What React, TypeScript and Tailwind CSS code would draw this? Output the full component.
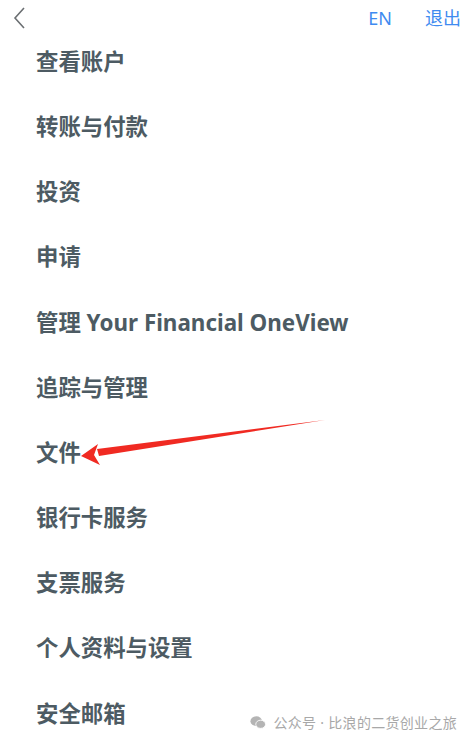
export default function App() {
  const items = [
    "查看账户",
    "转账与付款",
    "投资",
    "申请",
    "管理 Your Financial OneView",
    "追踪与管理",
    "文件",
    "银行卡服务",
    "支票服务",
    "个人资料与设置",
    "安全邮箱",
  ];

  return (
    <div
      className="relative w-[472px] h-[744px] overflow-hidden bg-white"
      style={{ fontFamily: '"Noto Sans", "Noto Sans CJK SC", sans-serif' }}
    >
      {/* header */}
      <div className="flex items-center h-[29px] pl-[12px] pr-[11px]">
        <svg width="14" height="24" viewBox="0 0 14 24" className="mt-[6px]">
          <path d="M12 2 L3 12 L12 22" fill="none" stroke="#6b6f72" strokeWidth="1.6" />
        </svg>
        <div className="ml-auto flex items-center gap-[33px] text-[18px] text-[#3f8bf0] mt-[7px]">
          <span>EN</span>
          <span>退出</span>
        </div>
      </div>

      {/* menu */}
      <div className="flex flex-col pl-[36px]">
        {items.map((t) => (
          <div key={t} className="h-[65.2px] flex items-center text-[22.4px] font-bold text-[#4d5b63]">
            {t}
          </div>
        ))}
      </div>

      {/* red arrow annotation */}
      <svg className="absolute left-0 top-0 pointer-events-none" width="472" height="744">
        <path d="M325 420 L97 449 L99 456 Z" fill="#f02a22" />
        <path d="M81 456 L98 444 L94 455 L100 465 Z" fill="#f02a22" />
      </svg>

      {/* watermark */}
      <div className="absolute right-[15px] bottom-[11px] flex items-center gap-[7px] text-[14px] text-[#a8a8a8]">
        <svg width="16" height="15" viewBox="0 0 18 16">
          <ellipse cx="7" cy="6.5" rx="6.5" ry="5.5" fill="#b4b4b4" />
          <ellipse cx="12" cy="10" rx="5.5" ry="4.6" fill="#b4b4b4" stroke="#fff" strokeWidth="1" />
        </svg>
        <span className="tracking-[0.3px]">公众号 · 比浪的二货创业之旅</span>
      </div>
    </div>
  );
}
